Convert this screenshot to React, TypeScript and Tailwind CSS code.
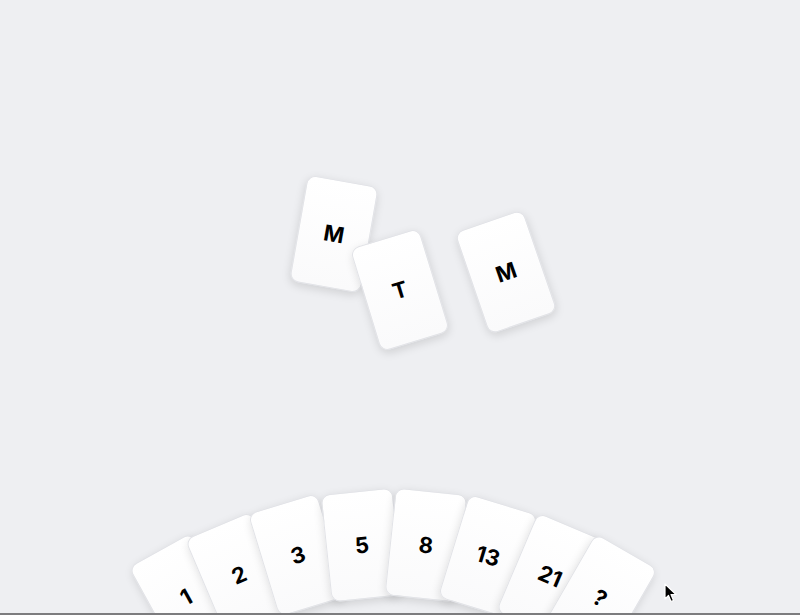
import React from "react";

type Card = { label: string; x: number; y: number; r: number };

const table: Card[] = [
  { label: "M", x: 334, y: 234, r: 10 },
  { label: "T", x: 400, y: 290, r: -17 },
  { label: "M", x: 506, y: 272, r: -19 },
];

const hand: Card[] = [
  { label: "1", x: 186, y: 597, r: -29 },
  { label: "2", x: 239, y: 575, r: -23 },
  { label: "3", x: 298, y: 555, r: -17 },
  { label: "5", x: 362, y: 545, r: -6 },
  { label: "8", x: 426, y: 545, r: 6 },
  { label: "13", x: 488, y: 556, r: 17 },
  { label: "21", x: 550, y: 576, r: 23 },
  { label: "?", x: 600, y: 598, r: 30 },
];

function PlayingCard({ c }: { c: Card }) {
  return (
    <div
      className="absolute flex h-[108px] w-[72px] items-center justify-center rounded-[9px] border border-[#e2e3e7] bg-gradient-to-b from-white to-[#fafafb] shadow-[0_3px_10px_rgba(0,0,0,0.13)]"
      style={{ left: c.x, top: c.y, transform: `translate(-50%, -50%) rotate(${c.r}deg)` }}
    >
      <span className="text-[22px] font-bold leading-none text-black [font-family:Inter,'Noto_Sans',sans-serif]">
        {c.label}
      </span>
    </div>
  );
}

export default function App() {
  return (
    <div className="relative h-[615px] w-full overflow-hidden bg-[#eeeff2]">
      {table.map((c, i) => (
        <PlayingCard key={"t" + i} c={c} />
      ))}
      {hand.map((c, i) => (
        <PlayingCard key={"h" + i} c={c} />
      ))}
      <svg className="absolute left-[664px] top-[583px]" width="14" height="20" viewBox="0 0 14 20">
        <path d="M1 1 L1 16 L4.5 12.5 L7 18.5 L9.5 17.5 L7 11.5 L12 11.5 Z" fill="#000" stroke="#fff" strokeWidth="1.2" strokeLinejoin="round" />
      </svg>
      <div className="absolute bottom-0 left-0 h-[2px] w-full bg-[#7c7c7e]" />
    </div>
  );
}
